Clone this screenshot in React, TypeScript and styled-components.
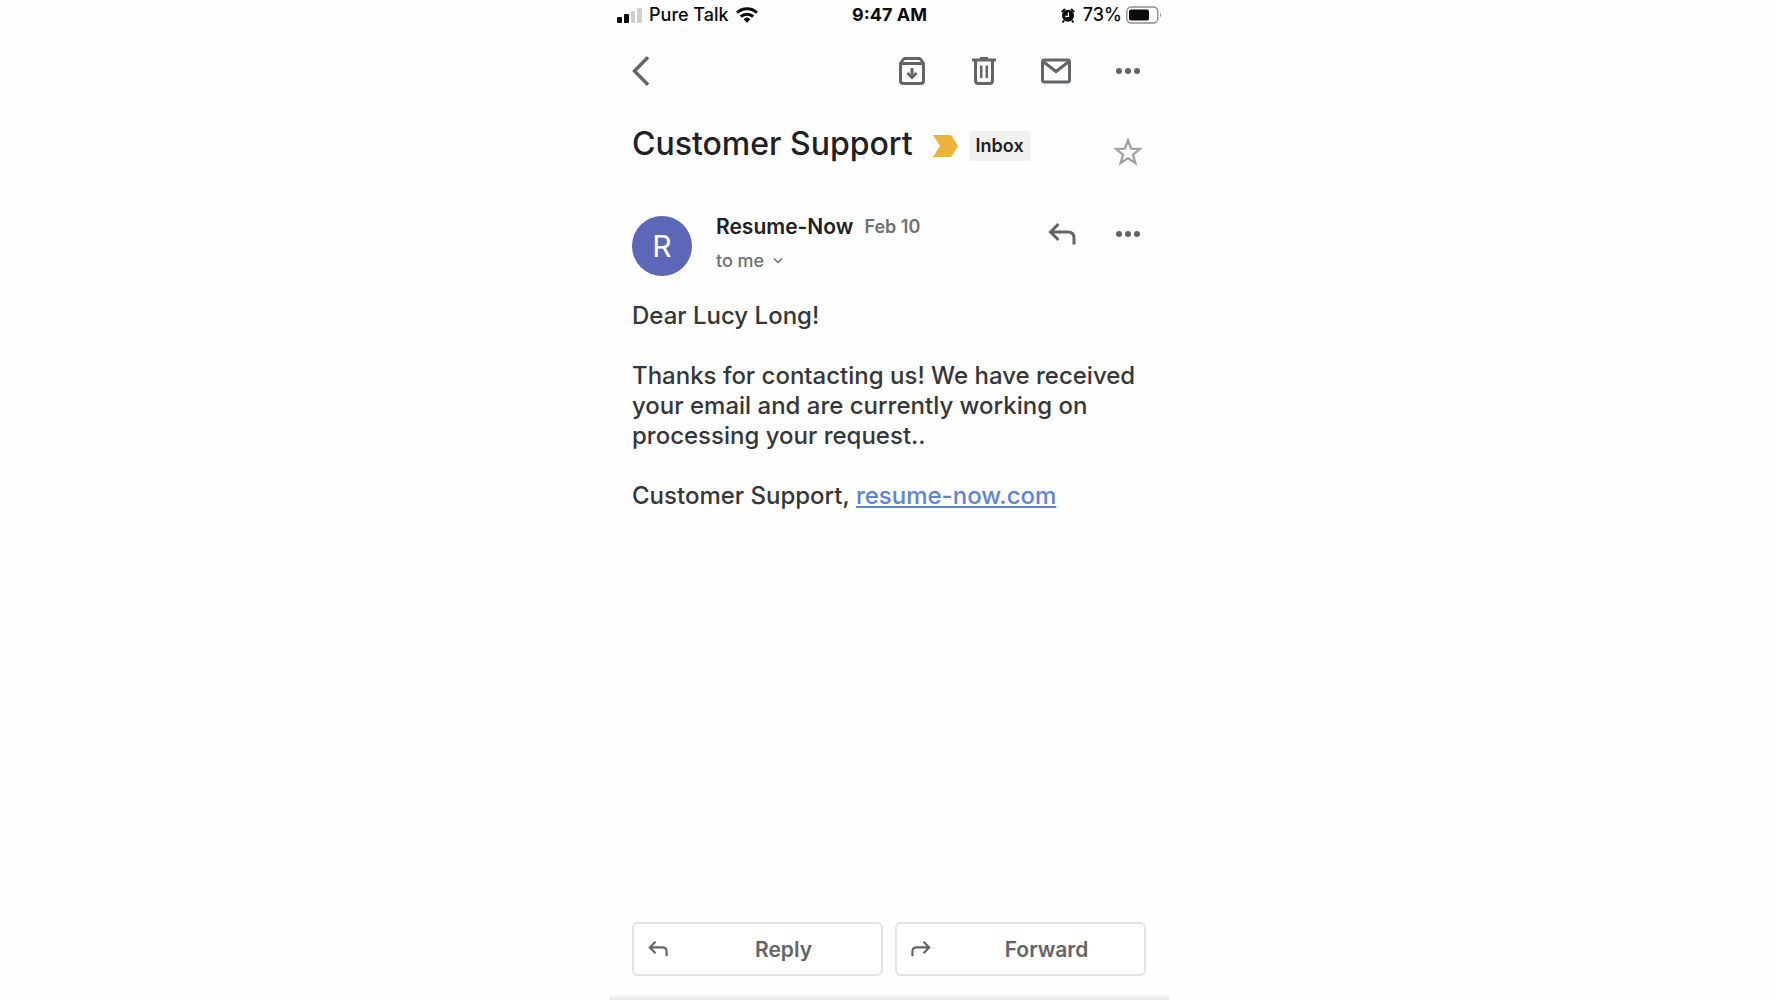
import React from 'react';
import styled, { createGlobalStyle } from 'styled-components';

const GlobalStyle = createGlobalStyle`
  *, *::before, *::after { box-sizing: border-box; }
  body {
    margin: 0;
    background: #fefefe;
    color: #202124;
    font-family: Inter, "Liberation Sans", Arial, sans-serif;
  }
  svg { display: block; flex: none; }
`;

const Screen = styled.div`
  display: flex;
  flex-direction: column;
  width: 100%;
  max-width: 560px;
  min-height: 100vh;
  margin: 0 auto;
`;

const StatusBar = styled.header`
  display: grid;
  grid-template-columns: 1fr auto 1fr;
  align-items: center;
  height: 30px;
  padding: 0 7px 0 8px;
  color: #0a0a0a;
  font-size: 18px;
  font-weight: 500;
  line-height: 20px;
`;

const StatusGroup = styled.div<{ $end?: boolean; $gap: number }>`
  display: flex;
  align-items: center;
  justify-content: ${(p) => (p.$end ? 'flex-end' : 'flex-start')};
  gap: ${(p) => p.$gap}px;
`;

const Clock = styled.time`
  font-weight: 700;
`;

const Toolbar = styled.nav`
  display: flex;
  align-items: center;
  justify-content: space-between;
  height: 82px;
  padding: 0 23px 0 15px;
`;

const Actions = styled.div<{ $gap: number }>`
  display: flex;
  gap: ${(p) => p.$gap}px;
`;

const IconButton = styled.button<{ $color?: string }>`
  display: flex;
  flex: none;
  align-items: center;
  justify-content: center;
  width: 36px;
  height: 36px;
  padding: 0;
  border: 0;
  background: none;
  color: ${(p) => p.$color ?? '#636466'};
  cursor: pointer;
`;

const SubjectRow = styled.section`
  display: flex;
  align-items: center;
  height: 68px;
  padding: 0 23px;
`;

const Subject = styled.h1`
  margin: 0 20px 4px 0;
  font-size: 32px;
  font-weight: 500;
  line-height: 40px;
  white-space: nowrap;
`;

const Label = styled.span`
  margin-left: 11px;
  padding: 4px 7px;
  border-radius: 4px;
  background: #f1f1f1;
  font-size: 18px;
  font-weight: 600;
  line-height: 22px;
`;

const StarSlot = styled.div`
  margin: 12px 0 0 auto;
`;

const SenderRow = styled.section`
  display: flex;
  align-items: flex-start;
  margin-top: 36px;
  padding: 0 23px;
`;

const Avatar = styled.div`
  display: flex;
  flex: none;
  align-items: center;
  justify-content: center;
  width: 60px;
  height: 60px;
  margin-right: 24px;
  border-radius: 50%;
  background: #5c67b8;
  color: #fff;
  font-size: 30px;
`;

const SenderText = styled.div`
  display: flex;
  flex-direction: column;
  gap: 12px;
  margin-right: auto;
`;

const SenderLine = styled.div`
  display: flex;
  align-items: center;
  gap: 11px;
  line-height: 22px;
`;

const SenderName = styled.strong`
  font-size: 21px;
  font-weight: 600;
`;

const Muted = styled.span`
  color: #6f7072;
  font-size: 18px;
  font-weight: 600;
`;

const Recipient = styled.button`
  display: flex;
  align-items: center;
  gap: 9px;
  padding: 0;
  border: 0;
  background: none;
  color: #6f7072;
  font: inherit;
  font-size: 18px;
  font-weight: 500;
  line-height: 22px;
  cursor: pointer;
`;

const Message = styled.article`
  padding: 25px 23px 0;
  color: #353638;
  font-size: 24px;
  font-weight: 500;
  line-height: 30px;

  p { margin: 0 0 30px; }
`;

const SiteLink = styled.a`
  color: #6084d0;
  text-decoration: underline;
  text-decoration-thickness: 2px;
  text-underline-offset: 2px;
  text-decoration-skip-ink: none;
`;

const Footer = styled.footer`
  margin-top: auto;
`;

const ReplyBar = styled.div`
  display: grid;
  grid-template-columns: 1fr 1fr;
  gap: 12px;
  padding: 0 23px 18px;
`;

const ReplyButton = styled.button`
  display: flex;
  align-items: center;
  height: 54px;
  padding: 0 0 0 14px;
  border: 2px solid #e3e3e4;
  border-radius: 6px;
  background: #fff;
  color: #636466;
  font: inherit;
  font-size: 21px;
  font-weight: 600;
  cursor: pointer;

  span {
    flex: 1;
    padding-left: 18px;
  }
`;

const BottomShade = styled.div`
  height: 6px;
  background: linear-gradient(#fefefe, #e6e6e6);
`;

const Dots = () => (
  <svg width="24" height="8" viewBox="0 0 24 8" fill="currentColor" aria-hidden="true">
    <circle cx="3" cy="4" r="3" />
    <circle cx="12" cy="4" r="3" />
    <circle cx="21" cy="4" r="3" />
  </svg>
);

const ReplyArrow = ({ size, flip }: { size: number; flip?: boolean }) => (
  <svg
    width={size}
    height={(size * 22) / 28}
    viewBox="0 0 28 22"
    fill="none"
    stroke="currentColor"
    strokeWidth="3"
    aria-hidden="true"
  >
    <g transform={flip ? 'translate(28 0) scale(-1 1)' : undefined}>
      <path d="M10.5 1 2.5 9l8 8M2.5 9H20q6 0 6 6v6.5" />
    </g>
  </svg>
);

export default function App() {
  return (
    <>
      <GlobalStyle />
      <Screen>
        <StatusBar>
          <StatusGroup $gap={7}>
            <svg width="25" height="16" viewBox="0 0 25 16" aria-label="Signal">
              <rect x="0" y="10" width="5" height="6" rx="1" fill="#0a0a0a" />
              <rect x="7" y="7" width="5" height="9" rx="1" fill="#0a0a0a" />
              <rect x="14" y="4" width="4" height="12" rx="1" fill="#d0d0d0" />
              <rect x="20" y="1" width="5" height="15" rx="1" fill="#d0d0d0" />
            </svg>
            <span>Pure Talk</span>
            <svg width="22" height="16" viewBox="0 0 22 16" fill="none" stroke="#0a0a0a" strokeWidth="3" aria-label="Wi-Fi">
              <path d="M1 5.8a14.3 14.3 0 0 1 20 0" />
              <path d="M4.8 9.7a8.9 8.9 0 0 1 12.4 0" />
              <path d="M7.6 12.2a5 5 0 0 1 6.8 0L11 15.8Z" fill="#0a0a0a" stroke="none" />
            </svg>
          </StatusGroup>
          <Clock>9:47 AM</Clock>
          <StatusGroup $end $gap={4}>
            <svg width="18" height="15" viewBox="0 0 18 15" aria-label="Alarm">
              <circle cx="7" cy="7.8" r="6" fill="#0a0a0a" />
              <path d="M.8 4 4 1M13.2 4 10 1M3 12.5 1.6 14.3M11 12.5l1.4 1.8" stroke="#0a0a0a" strokeWidth="2" />
              <path d="M7.4 4.5v3.8H4.2" fill="none" stroke="#fff" strokeWidth="1.3" />
            </svg>
            <span>73%</span>
            <svg width="36" height="18" viewBox="0 0 36 18" aria-label="Battery">
              <rect x=".8" y="1" width="31" height="16" rx="4.5" fill="none" stroke="#8d8d8d" strokeWidth="1.4" />
              <rect x="3" y="3.4" width="20" height="11.2" rx="2" fill="#0a0a0a" />
              <path d="M34 6.5q2 2.5 0 5Z" fill="#8d8d8d" />
            </svg>
          </StatusGroup>
        </StatusBar>

        <Toolbar>
          <IconButton aria-label="Back">
            <svg width="28" height="30" viewBox="0 0 28 30" fill="none" stroke="currentColor" strokeWidth="3.4" aria-hidden="true">
              <path d="M20 1.200 6.500 15 20 28.800" />
            </svg>
          </IconButton>
          <Actions $gap={36}>
            <IconButton aria-label="Archive">
              <svg width="26" height="28" viewBox="0 0 26 28" fill="none" stroke="currentColor" strokeWidth="3" aria-hidden="true">
                <path d="M1.500 6.500v17q0 3 3 3h17q3 0 3-3v-17L22 2.800Q21.200 1.500 20 1.500H6Q4.800 1.500 4 2.800ZM1.500 6.500h23" />
                <path d="M13 11v9" />
                <path d="m8.500 16 4.500 4.500 4.500-4.500" />
              </svg>
            </IconButton>
            <IconButton aria-label="Delete">
              <svg width="24" height="28" viewBox="0 0 24 28" fill="none" stroke="currentColor" strokeWidth="3" aria-hidden="true">
                <path d="M0 3h24M8 1.500h8M3.500 3v20.500q0 3 3 3h11q3 0 3-3V3" />
                <path d="M9.200 8.500v12.500M14.800 8.500v12.500" strokeWidth="2.500" />
              </svg>
            </IconButton>
            <IconButton aria-label="Mark unread">
              <svg width="30" height="26" viewBox="0 0 30 26" fill="none" stroke="currentColor" strokeWidth="3" aria-hidden="true">
                <rect x="1.500" y="2" width="27" height="22" rx="2" />
                <path d="M2 3.500 15 13.500 28 3.500" />
              </svg>
            </IconButton>
            <IconButton aria-label="More options"><Dots /></IconButton>
          </Actions>
        </Toolbar>

        <SubjectRow>
          <Subject>Customer Support</Subject>
          <svg width="25" height="22" viewBox="0 0 25 22" aria-label="Important">
            <path d="M0 0h17q1 0 2 1l6 10-6 10q-1 1-2 1H0l7-11Z" fill="#ecb43c" />
          </svg>
          <Label>Inbox</Label>
          <StarSlot>
            <IconButton aria-label="Star" $color="#a3a3a4">
              <svg width="30" height="30" viewBox="0 0 30 30" fill="none" stroke="currentColor" strokeWidth="2.400" aria-hidden="true">
                <path d="m15 3.500 3.100 8.200 8.700.4-6.800 5.500 2.300 8.500-7.300-4.800-7.300 4.800 2.300-8.500-6.800-5.500 8.700-.4Z" />
              </svg>
            </IconButton>
          </StarSlot>
        </SubjectRow>

        <SenderRow>
          <Avatar>R</Avatar>
          <SenderText>
            <SenderLine>
              <SenderName>Resume-Now</SenderName>
              <Muted as="time">Feb 10</Muted>
            </SenderLine>
            <Recipient>
              to me
              <svg width="10" height="8" viewBox="0 0 10 8" fill="none" stroke="currentColor" strokeWidth="1.500" aria-hidden="true">
                <path d="m1 1.500 4 4 4-4" />
              </svg>
            </Recipient>
          </SenderText>
          <Actions $gap={30}>
            <IconButton aria-label="Reply to sender"><ReplyArrow size={28} /></IconButton>
            <IconButton aria-label="More message options"><Dots /></IconButton>
          </Actions>
        </SenderRow>

        <Message>
          <p>Dear Lucy Long!</p>
          <p>
            Thanks for contacting us! We have received your email and are currently working on
            processing your request..
          </p>
          <p>
            Customer Support, <SiteLink href="#resume-now">resume-now.com</SiteLink>
          </p>
        </Message>

        <Footer>
          <ReplyBar>
            <ReplyButton>
              <ReplyArrow size={20} />
              <span>Reply</span>
            </ReplyButton>
            <ReplyButton>
              <ReplyArrow size={20} flip />
              <span>Forward</span>
            </ReplyButton>
          </ReplyBar>
          <BottomShade />
        </Footer>
      </Screen>
    </>
  );
}
